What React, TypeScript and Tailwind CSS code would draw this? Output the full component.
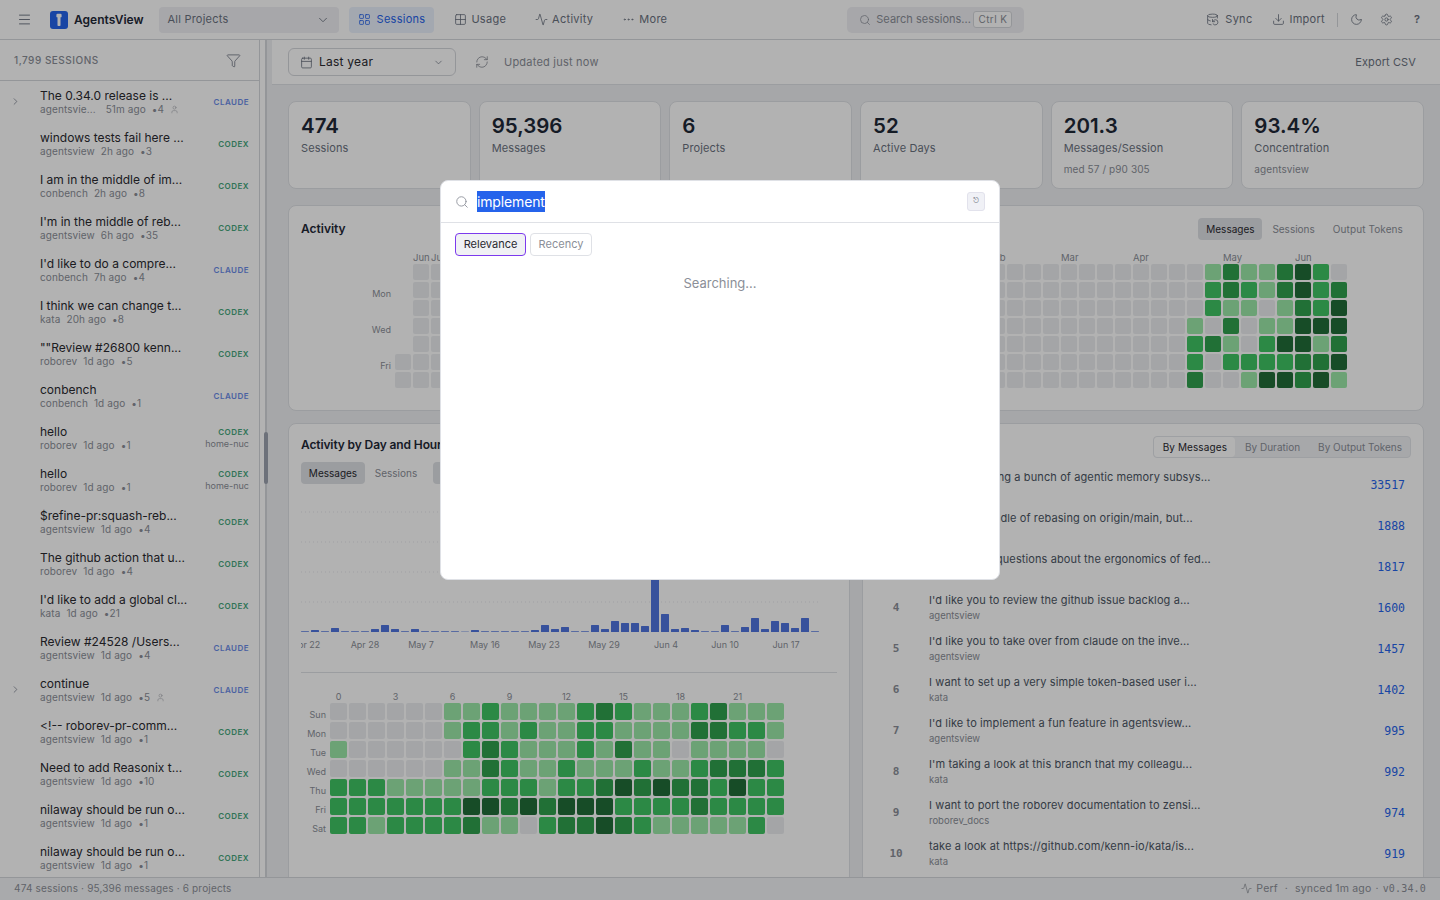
import {
  Menu, ChevronDown, LayoutGrid, Grid2X2, Activity, Ellipsis, Search, DatabaseBackup, Download, Moon, Settings,
  Funnel, ChevronRight, User, Calendar, RefreshCw,
} from "lucide-react";

const sessions: [string, string, string, string, "C" | "X", boolean, string?][] = [
  ["The 0.34.0 release is ...", "agentsvie...", "51m ago", "4", "C", true],
  ["windows tests fail here ...", "agentsview", "2h ago", "3", "X", false],
  ["I am in the middle of im...", "conbench", "2h ago", "8", "X", false],
  ["I'm in the middle of reb...", "agentsview", "6h ago", "35", "X", false],
  ["I'd like to do a compre...", "conbench", "7h ago", "4", "C", false],
  ["I think we can change t...", "kata", "20h ago", "8", "X", false],
  ["\"\"Review #26800 kenn...", "roborev", "1d ago", "5", "X", false],
  ["conbench", "conbench", "1d ago", "1", "C", false],
  ["hello", "roborev", "1d ago", "1", "X", false, "home-nuc"],
  ["hello", "roborev", "1d ago", "1", "X", false, "home-nuc"],
  ["$refine-pr:squash-reb...", "agentsview", "1d ago", "4", "X", false],
  ["The github action that u...", "roborev", "1d ago", "4", "X", false],
  ["I'd like to add a global cl...", "kata", "1d ago", "21", "X", false],
  ["Review #24528 /Users...", "agentsview", "1d ago", "4", "C", false],
  ["continue", "agentsview", "1d ago", "5", "C", true],
  ["<!-- roborev-pr-comm...", "agentsview", "1d ago", "1", "X", false],
  ["Need to add Reasonix t...", "agentsview", "1d ago", "10", "X", false],
  ["nilaway should be run o...", "agentsview", "1d ago", "1", "X", false],
  ["nilaway should be run o...", "agentsview", "1d ago", "1", "X", false],
];

const stats: [string, string, string?][] = [
  ["474", "Sessions"],
  ["95,396", "Messages"],
  ["6", "Projects"],
  ["52", "Active Days"],
  ["201.3", "Messages/Session", "med 57 / p90 305"],
  ["93.4%", "Concentration", "agentsview"],
];

const levels = ["bg-[#ebedf0]", "bg-[#9be9a8]", "bg-[#40c463]", "bg-[#30a14e]", "bg-[#216e39]"];

const tail = [
  [0, 1, 3, 1, 1, 3, 4, 2, 0],
  [0, 2, 3, 2, 1, 3, 4, 2, 3],
  [0, 2, 1, 1, 0, 1, 3, 2, 4],
  [1, 0, 3, 0, 1, 1, 4, 4, 4],
  [2, 3, 1, 0, 2, 4, 4, 1, 3],
  [2, 0, 2, 2, 2, 2, 3, 3, 4],
  [3, 0, 0, 1, 4, 4, 3, 4, 1],
];

const hours = [
  [0,0,0,0,0,0,1,1,2,1,1,1,1,2,3,2,1,1,1,2,3,1,1,1],
  [0,0,0,0,0,0,1,2,2,1,2,1,1,2,2,1,1,1,1,3,3,2,2,1],
  [1,0,0,0,0,0,0,2,3,2,1,1,1,2,1,3,1,1,0,1,1,1,1,0],
  [0,0,0,0,0,0,1,1,3,2,1,1,2,1,1,1,2,1,1,2,3,3,3,2],
  [2,2,2,1,1,1,1,1,2,2,2,1,2,2,3,4,3,4,3,3,2,4,2,2],
  [2,2,2,2,2,2,2,4,4,3,4,3,4,4,4,2,2,2,2,3,2,2,2,2],
  [2,2,1,2,2,2,2,3,1,1,0,2,3,3,4,3,2,1,1,1,1,1,2,0],
];

const bars = [1,2,1,4,1,1,1,3,7,3,1,3,1,1,1,1,0.5,2,1,1,1,1,1,2,7,3,5,1,1,7,3,11,9,9,6,130,18,3,4,2,1,1,7,1,5,14,3,11,9,4,14,1];

const barLabels: [string, number][] = [
  ["Apr 22", 306], ["Apr 28", 365], ["May 7", 421], ["May 16", 485], ["May 23", 544],
  ["May 29", 604], ["Jun 4", 666], ["Jun 10", 725], ["Jun 17", 786],
];

const top: [string, string, string, string][] = [
  ["1", "I'm researching a bunch of agentic memory subsys...", "agentsview", "33517"],
  ["2", "I'm in the middle of rebasing on origin/main, but...", "agentsview", "1888"],
  ["3", "I have some questions about the ergonomics of fed...", "kata", "1817"],
  ["4", "I'd like you to review the github issue backlog a...", "agentsview", "1600"],
  ["5", "I'd like you to take over from claude on the inve...", "agentsview", "1457"],
  ["6", "I want to set up a very simple token-based user i...", "kata", "1402"],
  ["7", "I'd like to implement a fun feature in agentsview...", "agentsview", "995"],
  ["8", "I'm taking a look at this branch that my colleagu...", "kata", "992"],
  ["9", "I want to port the roborev documentation to zensi...", "roborev_docs", "974"],
  ["10", "take a look at https://github.com/kenn-io/kata/is...", "kata", "919"],
];

const mono = "font-['DejaVu_Sans_Mono',monospace]";

function NavItem({ icon, label, active, wide }: { icon: React.ReactNode; label: string; active?: boolean; wide?: boolean }) {
  return (
    <div className={`flex h-[26px] items-center whitespace-nowrap rounded px-[9px] text-[11px] tracking-[0.025em] ${wide ? "gap-[6px]" : "gap-[4px]"} ${active ? "bg-[#eaf1fc] text-[#2563eb]" : "text-[#6b7280]"}`}>
      {icon}
      {label}
    </div>
  );
}

function Header() {
  return (
    <header className="flex h-10 shrink-0 items-center border-b border-[#d5d7dc] bg-white pl-[17px]">
      <Menu size={15} strokeWidth={1.5} className="text-[#6b7280]" />
      <div className="ml-[18px] flex h-[18px] w-[18px] items-center justify-center rounded-[3px] bg-[#2563eb]">
        <svg width="10" height="14" viewBox="0 0 10 14">
          <rect x="2.4" y="0.8" width="5.2" height="3.6" rx="1.2" fill="white" />
          <rect x="3.5" y="4" width="3" height="9" rx="0.8" fill="white" />
        </svg>
      </div>
      <span className="ml-[6px] text-[12px] font-semibold text-[#1f2937]">AgentsView</span>
      <div className="ml-[15px] flex h-[26px] w-[180px] items-center justify-between rounded bg-[#f0f0f4] pl-[9px] pr-[9px] text-[11px] tracking-[0.02em] text-[#6b7280]">
        All Projects
        <ChevronDown size={14} strokeWidth={1.5} />
      </div>
      <div className="ml-[10px] flex items-center gap-[2px]">
        <NavItem active wide label="Sessions" icon={<LayoutGrid size={13} strokeWidth={1.5} />} />
        <div className="w-[7px]" />
        <NavItem label="Usage" icon={<Grid2X2 size={13} strokeWidth={1.5} />} />
        <div className="w-[7px]" />
        <NavItem label="Activity" icon={<Activity size={13} strokeWidth={1.5} />} />
        <div className="w-[7px]" />
        <NavItem label="More" icon={<Ellipsis size={13} strokeWidth={1.5} />} />
      </div>
      <div className="ml-[171px] flex h-[26px] w-[177px] items-center whitespace-nowrap rounded-[5px] bg-[#f0f0f4] pl-3 pr-3 text-[11px] text-[#8b8f98]">
        <Search size={12} strokeWidth={1.5} className="shrink-0" />
        <span className="ml-[5px]">Search sessions...</span>
        <span className="ml-auto rounded-[3px] border border-[#d5d7dc] bg-white px-[4px] text-[10px] leading-[15px] tracking-[0.04em]">Ctrl K</span>
      </div>
      <div className="ml-[173px] flex h-[26px] items-center text-[#6b7280]">
        <NavItem wide label="Sync" icon={<DatabaseBackup size={13} strokeWidth={1.5} />} />
        <div className="w-[2px]" />
        <NavItem label="Import" icon={<Download size={13} strokeWidth={1.5} />} />
        <div className="ml-[3px] h-[14px] w-px bg-[#d5d7dc]" />
        <Moon size={13} strokeWidth={1.5} className="ml-[12px]" />
        <Settings size={13} strokeWidth={1.5} className="ml-[17px]" />
        <span className="ml-[21px] text-[11px] font-semibold">?</span>
      </div>
    </header>
  );
}

function Sidebar() {
  return (
    <aside className="flex w-[260px] shrink-0 flex-col border-r border-[#d5d7dc] bg-white">
      <div className="flex h-[41px] shrink-0 items-center justify-between border-b border-[#d5d7dc] pl-[14px] pr-[18px]">
        <span className="pt-[1px] text-[10px] font-medium tracking-[0.05em] text-[#8b8f98]">1,799 SESSIONS</span>
        <Funnel size={15} strokeWidth={1.25} className="text-[#6b7280]" />
      </div>
      <div className="min-h-0 flex-1 overflow-hidden">
        {sessions.map(([title, project, ago, n, agent, child, host], i) => (
          <div key={i} className="relative flex h-[42px] items-center pl-10 pr-[10px]">
            {child && <ChevronRight size={11} strokeWidth={1.5} className="absolute left-[10px] top-[15px] text-[#6b7280]" />}
            <div className="min-w-0 flex-1">
              <div className="whitespace-nowrap text-[12px] leading-[15px] text-[#2a2a30]">{title}</div>
              <div className="flex items-center gap-[6px] whitespace-nowrap text-[10px] leading-[13px] tracking-[0.01em] text-[#8b8f98]">
                <span className={project.endsWith("...") ? "mr-[4px]" : ""}>{project}</span>
                <span>{ago}</span>
                <span>•{n}</span>
                {child && <User size={9} strokeWidth={1.5} className="text-[#a5a8ae]" />}
              </div>
            </div>
            <div className="flex shrink-0 flex-col items-end">
              <span className={`text-[8px] font-semibold leading-[11px] tracking-[0.06em] ${agent === "C" ? "text-[#6b8ce8]" : "text-[#45a67c]"}`}>
                {agent === "C" ? "CLAUDE" : "CODEX"}
              </span>
              {host && <span className="text-[9px] leading-[11px] text-[#8b8f98]">{host}</span>}
            </div>
          </div>
        ))}
      </div>
    </aside>
  );
}

function Resizer() {
  return (
    <div className="relative w-[7px] shrink-0 border-r-2 border-[#d5d7dc] bg-white">
      <div className="absolute left-[4px] top-[392px] h-[52px] w-[4px] rounded-sm bg-[#9ca3af]" />
    </div>
  );
}

function ActivityCard() {
  const weeks = Array.from({ length: 53 }, (_, c) => c);
  return (
    <section className="relative mt-[16px] h-[206px] rounded-lg border border-[#dfe1e6] bg-white px-[12px] pt-[14px]">
      <h3 className="text-[12px] font-semibold leading-[18px] text-[#1f2937]">Activity</h3>
      <div className="absolute right-[12px] top-[12px] flex items-center text-[10px] text-[#8b8f98]">
        <span className="flex h-[22px] w-[64px] items-center justify-center rounded bg-[#dfe1e6] text-[#2a2a30]">Messages</span>
        <span className="pl-[10px] pr-[9px]">Sessions</span>
        <span className="pl-[9px] pr-2 tracking-[0.01em]">Output Tokens</span>
      </div>
      <div className="absolute left-[72px] top-[48px] w-[30px] text-[9px] text-[#8b8f98]">
        <div className="text-right leading-[18px]" style={{ marginTop: 31 }}>Mon</div>
        <div className="text-right leading-[18px]" style={{ marginTop: 18 }}>Wed</div>
        <div className="text-right leading-[18px]" style={{ marginTop: 18 }}>Fri</div>
      </div>
      <div className="absolute left-[106px] top-[45px] h-[14px] w-[1000px] text-[9.5px] leading-[14px] text-[#8b8f98]">
        {([["Jun", 18], ["Jul", 36], ["Feb", 594], ["Mar", 666], ["Apr", 738], ["May", 828], ["Jun", 900]] as [string, number][]).map(([m, x], i) => (
          <span key={i} className="absolute top-0" style={{ left: x }}>{m}</span>
        ))}
      </div>
      <div className="absolute left-[106px] top-[58px] grid grid-flow-col grid-rows-7 gap-[2px]">
        {weeks.flatMap((c) =>
          Array.from({ length: 7 }, (_, r) => {
            const lvl = c >= 44 ? tail[r][c - 44] : 0;
            const hidden = c === 0 && r < 5;
            return <div key={`${c}-${r}`} className={`h-4 w-4 rounded-[2px] ${hidden ? "" : levels[lvl]}`} />;
          })
        )}
      </div>
    </section>
  );
}

function BarChart() {
  return (
    <svg width="536" height="176" viewBox="301 489 536 176" className="block">
      <line x1="301" x2="820" y1="602" y2="602" stroke="#e5e7eb" strokeDasharray="1 3" />
      <line x1="301" x2="820" y1="572" y2="572" stroke="#e5e7eb" strokeDasharray="1 3" />
      <line x1="301" x2="820" y1="542" y2="542" stroke="#e5e7eb" strokeDasharray="1 3" />
      <line x1="301" x2="820" y1="512" y2="512" stroke="#e5e7eb" strokeDasharray="1 3" />
      {bars.map((h, i) => (
        <rect key={i} x={301 + i * 10} y={632 - h} width="8" height={h} rx="0.5" fill={h <= 1 ? "#7f9ae8" : "#4f75e0"} />
      ))}
      {barLabels.map(([t, x]) => (
        <text key={t} x={x} y={648} textAnchor="middle" fontSize="9" fill="#8b8f98" fontFamily="Inter">{t}</text>
      ))}
    </svg>
  );
}

function HourCard() {
  const days = ["Sun", "Mon", "Tue", "Wed", "Thu", "Fri", "Sat"];
  return (
    <section className="min-w-0 rounded-lg border border-[#dfe1e6] bg-white px-[12px] pt-[12px] pb-8">
      <h3 className="text-[12px] font-semibold leading-[18px] tracking-[-0.01em] text-[#1f2937]">Activity by Day and Hour</h3>
      <div className="mt-[8px] flex h-[22px] items-center text-[10px] text-[#8b8f98]">
        <span className="flex h-[22px] w-[64px] items-center justify-center rounded bg-[#dfe1e6] text-[#2a2a30]">Messages</span>
        <span className="flex w-[62px] justify-center">Sessions</span>
        <span className="ml-[6px] h-[22px] w-[64px] rounded bg-[#dfe1e6]" />
      </div>
      <div className="mt-[5px]">
        <BarChart />
      </div>
      <div className="mt-[7px] border-t border-[#dfe1e6] pt-[17px]">
        <div className="grid grid-cols-[27px_repeat(24,17px)] gap-[2px] text-[9px] text-[#8b8f98]">
          <div />
          {Array.from({ length: 24 }, (_, h) => (
            <div key={h} className="h-[11px] text-center leading-[13px]">{h % 3 === 0 ? h : ""}</div>
          ))}
          {days.map((d, r) => [
            <div key={d} className="h-[17px] pr-[2px] pt-[3px] text-right leading-[17px]">{d}</div>,
            ...hours[r].map((l, c) => <div key={`${d}${c}`} className={`h-[17px] rounded-[2px] ${levels[l]}`} />),
          ])}
        </div>
      </div>
    </section>
  );
}

function TopCard() {
  return (
    <section className="min-w-0 rounded-lg border border-[#dfe1e6] bg-white pb-4">
      <div className="flex justify-end pr-[12px] pt-[12px]">
        <div className="flex h-[22px] items-center rounded border border-[#e3e5ea] bg-[#f0f1f4] text-[10px] text-[#8b8f98]">
          <span className="flex h-[20px] items-center rounded bg-white pl-[9px] pr-[8px] tracking-[0.01em] text-[#2a2a30]">By Messages</span>
          <span className="pl-[10px] pr-[9px]">By Duration</span>
          <span className="pl-[9px] pr-[8px]">By Output Tokens</span>
        </div>
      </div>
      <div className="mt-[7px]">
        {top.map(([rank, title, proj, val]) => (
          <div key={rank} className="flex h-[41px] items-center pl-[13px] pr-[18px]">
            <span className={`w-[40px] text-center text-[11px] font-semibold text-[#8b8f98] ${mono}`}>{rank}</span>
            <div className="ml-[13px] min-w-0 flex-1 pb-[4px]">
              <div className="whitespace-nowrap text-[11px] leading-[16px] tracking-[0.01em] text-[#4b5563]">{title}</div>
              <div className="pt-[1px] text-[9.5px] leading-[13px] text-[#8b8f98]">{proj}</div>
            </div>
            <span className={`text-[11.5px] text-[#2563eb] ${mono}`}>{val}</span>
          </div>
        ))}
      </div>
    </section>
  );
}

function Main() {
  return (
    <main className="flex min-w-0 flex-1 flex-col bg-[#eef0f2]">
      <div className="ml-[5px] flex h-[45px] shrink-0 items-center border-b border-[#dfe1e6] bg-white pl-4 pr-6">
        <div className="flex h-[28px] w-[168px] items-center rounded-md border border-[#d5d7dc] bg-white pl-[11px] pr-[11px] text-[12px] tracking-[0.02em] text-[#2a2a30]">
          <Calendar size={13} strokeWidth={1.5} className="text-[#6b7280]" />
          <span className="ml-[6px]">Last year</span>
          <ChevronDown size={11} strokeWidth={1.5} className="ml-auto text-[#6b7280]" />
        </div>
        <RefreshCw size={14} strokeWidth={1.25} className="ml-[19px] text-[#7b7f88]" />
        <span className="ml-[15px] pt-[1px] text-[11px] tracking-[0.02em] text-[#8b8f98]">Updated just now</span>
        <span className="ml-auto pt-[1px] text-[11px] tracking-[0.01em] text-[#6b7280]">Export CSV</span>
      </div>
      <div className="min-h-0 flex-1 overflow-hidden pl-[21px] pr-4 pt-4">
        <div className="grid grid-cols-6 gap-2">
          {stats.map(([v, l, s]) => (
            <div key={l} className="h-[88px] rounded-lg border border-[#dfe1e6] bg-white px-[12px] pt-[11px]">
              <div className="text-[20.5px] font-semibold leading-[26px] text-[#1f2937]">{v}</div>
              <div className="pt-[1px] text-[11px] leading-[16px] tracking-[0.01em] text-[#6b7280]">{l}</div>
              {s && <div className="mt-[6px] text-[10px] leading-[14px] tracking-[0.01em] text-[#8b8f98]">{s}</div>}
            </div>
          ))}
        </div>
        <ActivityCard />
        <div className="mt-[12px] grid grid-cols-2 gap-[12px]">
          <HourCard />
          <TopCard />
        </div>
      </div>
    </main>
  );
}

function Modal() {
  return (
    <div className="absolute left-[440px] top-[180px] flex h-[400px] w-[560px] flex-col rounded-[8px] border border-[#dfe1e6] bg-white">
      <div className="flex h-[42px] shrink-0 items-center border-b border-[#dfe1e6] pl-[14px] pr-[14px]">
        <Search size={14} strokeWidth={1.5} className="text-[#8b8f98]" />
        <span className="ml-[8px] inline-block bg-[#2563eb] text-[14px] leading-[21px] tracking-[-0.01em] text-white">implement</span>
        <span className="ml-auto flex h-[19px] w-[18px] items-center justify-center rounded-[3px] border border-[#e2e2ec] bg-[#f0f1f6] text-[7px] text-[#8b8f98]">⎋</span>
      </div>
      <div className="flex gap-[4px] px-[14px] pt-[10px] text-[11px]">
        <span className="flex h-[23px] w-[71px] items-center justify-center rounded-[4px] border border-[#7c3aed] bg-[#f0f1f4] text-[#2a2a30]">Relevance</span>
        <span className="flex h-[23px] w-[62px] items-center justify-center rounded-[4px] border border-[#dfe1e6] text-[#8b8f98]">Recency</span>
      </div>
      <div className="mt-[18px] text-center text-[13px] text-[#8b8f98]">Searching...</div>
    </div>
  );
}

export default function App() {
  return (
    <div className="relative flex h-[900px] w-[1440px] flex-col overflow-hidden bg-white font-['Inter',sans-serif]">
      <Header />
      <div className="flex min-h-0 flex-1">
        <Sidebar />
        <Resizer />
        <Main />
      </div>
      <footer className="flex h-[23px] shrink-0 items-center justify-between border-t border-[#d5d7dc] bg-[#f3f4f6] pb-[1px] pl-[14px] pr-[14px] text-[10px] tracking-[0.017em] text-[#8b8f98]">
        <span>474 sessions · 95,396 messages · 6 projects</span>
        <span className="flex items-center text-[10.5px]">
          <Activity size={11} strokeWidth={1.5} className="mr-[4px]" />
          Perf<span className="mx-[7px]">·</span>synced 1m ago<span className="mx-[4px]">·</span>
          <span className={`text-[10px] ${mono}`}>v0.34.0</span>
        </span>
      </footer>
      <div className="absolute inset-0 bg-black/30" />
      <Modal />
    </div>
  );
}
